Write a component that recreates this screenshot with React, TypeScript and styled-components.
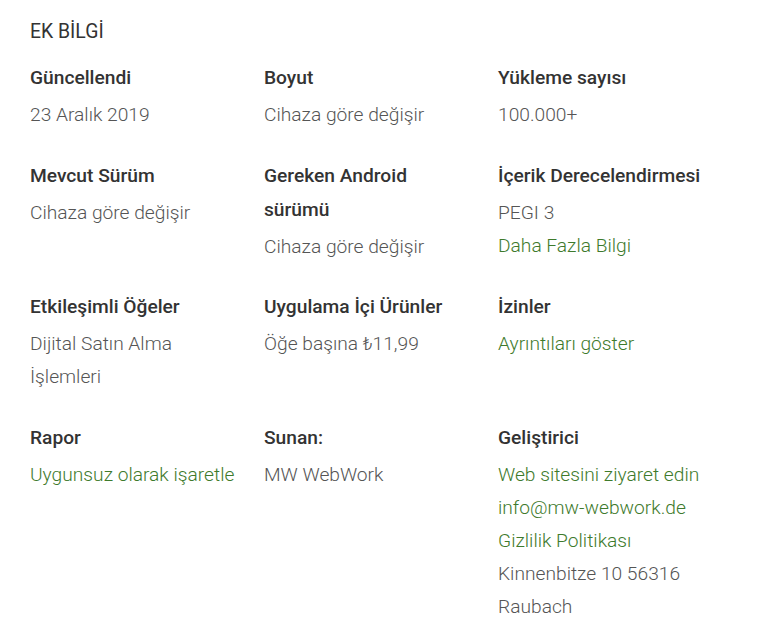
import styled, { createGlobalStyle } from 'styled-components';

const GlobalStyle = createGlobalStyle`
  body {
    margin: 0;
    background: #ffffff;
    font-family: Roboto, "Noto Sans", Arial, sans-serif;
  }
`;

const Wrapper = styled.div`
  padding: 15px 0 0 30px;
`;

const Heading = styled.h2`
  margin: 0 0 12px;
  font-size: 19.4px;
  line-height: 34px;
  font-weight: 400;
  color: #333333;
`;

const InfoGrid = styled.div`
  display: grid;
  grid-template-columns: repeat(3, 234px);
  row-gap: 27.5px;
`;

const InfoCell = styled.div`
  display: flex;
  flex-direction: column;
  padding-right: 26px;
`;

const Label = styled.div`
  font-size: 19.2px;
  line-height: 34px;
  font-weight: 500;
  color: #333333;
  margin-bottom: 3px;
`;

const Value = styled.div<{ $link?: boolean }>`
  font-size: 19.2px;
  line-height: 33px;
  font-weight: 300;
  color: ${(p) => (p.$link ? '#3e7a2c' : '#555555')};
`;

type Line = { text: string; link?: boolean };
type Item = { label: string; lines: Line[] };

const items: Item[] = [
  { label: 'Güncellendi', lines: [{ text: '23 Aralık 2019' }] },
  { label: 'Boyut', lines: [{ text: 'Cihaza göre değişir' }] },
  { label: 'Yükleme sayısı', lines: [{ text: '100.000+' }] },
  { label: 'Mevcut Sürüm', lines: [{ text: 'Cihaza göre değişir' }] },
  { label: 'Gereken Android sürümü', lines: [{ text: 'Cihaza göre değişir' }] },
  {
    label: 'İçerik Derecelendirmesi',
    lines: [{ text: 'PEGI 3' }, { text: 'Daha Fazla Bilgi', link: true }],
  },
  { label: 'Etkileşimli Öğeler', lines: [{ text: 'Dijital Satın Alma İşlemleri' }] },
  { label: 'Uygulama İçi Ürünler', lines: [{ text: 'Öğe başına ₺11,99' }] },
  { label: 'İzinler', lines: [{ text: 'Ayrıntıları göster', link: true }] },
  { label: 'Rapor', lines: [{ text: 'Uygunsuz olarak işaretle', link: true }] },
  { label: 'Sunan:', lines: [{ text: 'MW WebWork' }] },
  {
    label: 'Geliştirici',
    lines: [
      { text: 'Web sitesini ziyaret edin', link: true },
      { text: 'info@mw-webwork.de', link: true },
      { text: 'Gizlilik Politikası', link: true },
      { text: 'Kinnenbitze 10 56316 Raubach' },
    ],
  },
];

const App = () => (
  <>
    <GlobalStyle />
    <Wrapper>
      <Heading>EK BİLGİ</Heading>
      <InfoGrid>
        {items.map((item) => (
          <InfoCell key={item.label}>
            <Label>{item.label}</Label>
            {item.lines.map((line) => (
              <Value key={line.text} $link={line.link}>
                {line.text}
              </Value>
            ))}
          </InfoCell>
        ))}
      </InfoGrid>
    </Wrapper>
  </>
);

export default App;
